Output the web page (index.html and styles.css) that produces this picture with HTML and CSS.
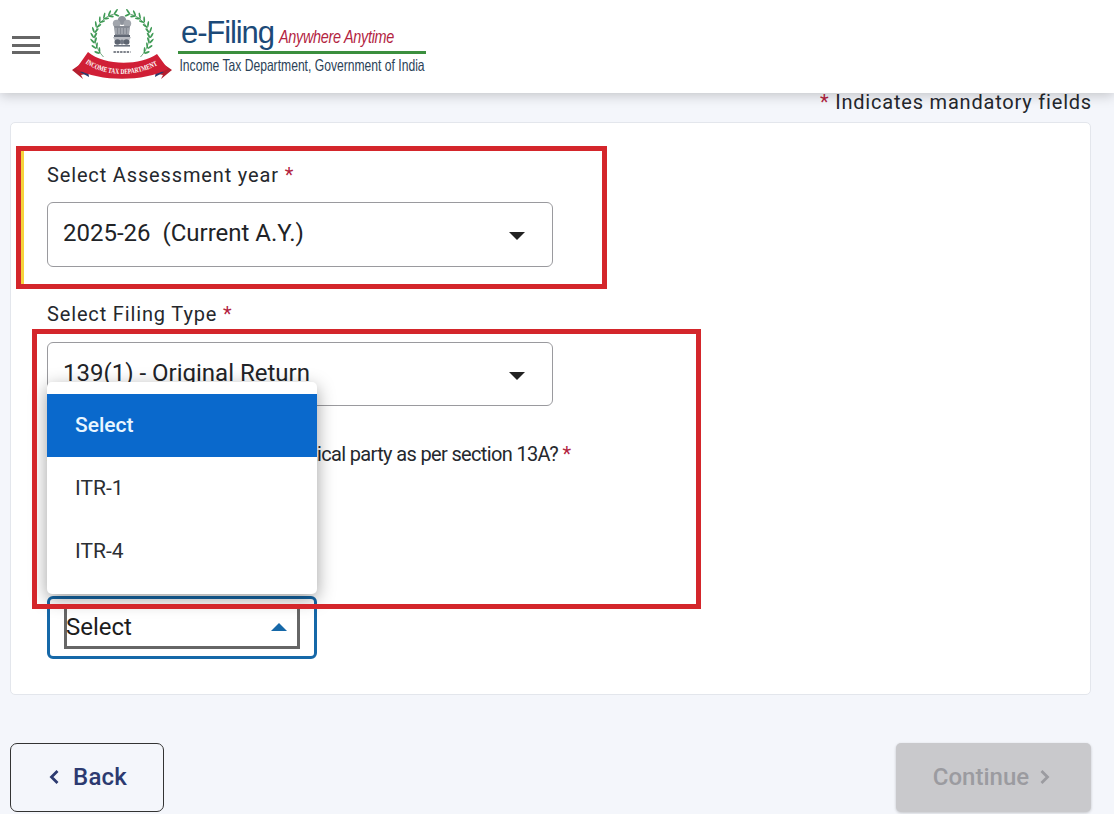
FILE: index.html
```html
<!DOCTYPE html>
<html lang="en">
<head>
    <meta charset="UTF-8">
    <meta name="viewport" content="width=device-width, initial-scale=1.0">
    <title>e-Filing - File Income Tax Return</title>
    <link rel="stylesheet" href="styles.css">
</head>
<body>
    <header class="top-bar">
        <div class="hamburger"><span></span><span></span><span></span></div>
        <svg class="emblem" width="102" height="72" viewBox="0 0 102 72">
            <defs>
                <ellipse id="leaf" cx="3.2" cy="0" rx="3.2" ry="1"/>
                <g id="wreath-half" fill="#3f9a55">
                    <path d="M41 5 C22 9 10 30 29 48" fill="none" stroke="#2f7d45" stroke-width="0.7"/>
                    <use href="#leaf" transform="translate(41 5) rotate(-50)"/><use href="#leaf" transform="translate(41 5) rotate(20)"/>
                    <use href="#leaf" transform="translate(34.4 6.9) rotate(-63)"/><use href="#leaf" transform="translate(34.4 6.9) rotate(7)"/>
                    <use href="#leaf" transform="translate(29 9.8) rotate(-75)"/><use href="#leaf" transform="translate(29 9.8) rotate(-5)"/>
                    <use href="#leaf" transform="translate(24.6 13.6) rotate(-87)"/><use href="#leaf" transform="translate(24.6 13.6) rotate(-17)"/>
                    <use href="#leaf" transform="translate(20.9 18.4) rotate(-100)"/><use href="#leaf" transform="translate(20.9 18.4) rotate(-30)"/>
                    <use href="#leaf" transform="translate(18.7 23.8) rotate(-113)"/><use href="#leaf" transform="translate(18.7 23.8) rotate(-43)"/>
                    <use href="#leaf" transform="translate(18 29) rotate(-125)"/><use href="#leaf" transform="translate(18 29) rotate(-55)"/>
                    <use href="#leaf" transform="translate(18.7 34.2) rotate(-137)"/><use href="#leaf" transform="translate(18.7 34.2) rotate(-67)"/>
                    <use href="#leaf" transform="translate(20.9 39.6) rotate(-150)"/><use href="#leaf" transform="translate(20.9 39.6) rotate(-80)"/>
                    <use href="#leaf" transform="translate(24.6 44.4) rotate(-163)"/><use href="#leaf" transform="translate(24.6 44.4) rotate(-93)"/>
                </g>
            </defs>
            <g transform="translate(50 28) scale(0.88 1) translate(-50 -28)">
                <use href="#wreath-half"/>
                <use href="#wreath-half" transform="matrix(-1 0 0 1 100 0)"/>
            </g>
            <!-- ashoka capital -->
            <g transform="translate(0 2)">
                <circle cx="50" cy="9.5" r="4.4" fill="#8d929b"/>
                <circle cx="44.6" cy="12.5" r="3.8" fill="#a2a6ad"/>
                <circle cx="55.4" cy="12.5" r="3.8" fill="#a2a6ad"/>
                <path d="M42 15 L58 15 L57 24 L43 24 Z" fill="#868b94"/>
                <path d="M44 17 V23 M47 17 V23 M50 17 V23 M53 17 V23 M56 17 V23" stroke="#c9ccd1" stroke-width="0.8"/>
                <rect x="42" y="24" width="16" height="2" fill="#5f6672"/>
                <path d="M41 26 H59 L56 32 H44 Z" fill="#b9bcc2"/>
                <ellipse cx="45.5" cy="31" rx="3" ry="2.8" fill="#5d6470"/>
                <ellipse cx="54.5" cy="31" rx="3" ry="2.8" fill="#5d6470"/>
                <ellipse cx="50" cy="31" rx="2.2" ry="2.6" fill="#717783"/>
                <rect x="42" y="34" width="16" height="1.6" fill="#6d7480"/>
                <path d="M41.5 41 H58.5" stroke="#555b66" stroke-width="1.6" stroke-dasharray="2.4 0.9"/>
            </g>
            <!-- ribbon -->
            <path d="M0 61 L10 54 L19 64 L9 66 L11 70 Z" fill="#b41f2f"/>
            <path d="M100 61 L90 54 L81 64 L91 66 L89 70 Z" fill="#b41f2f"/>
            <path d="M8 63 L16 61 L17 68 Z" fill="#2b3a6b"/>
            <path d="M92 63 L84 61 L83 68 Z" fill="#2b3a6b"/>
            <path d="M16 43 C32 57 68 57 85 45 L96 60 C72 73 28 73 4 60 Z" fill="#d01f36"/>
            <path id="ribbonCurve" d="M11 52 C30 69 68 69 90 53" fill="none"/>
            <text class="ribbon-text"><textPath href="#ribbonCurve" startOffset="3" textLength="76" lengthAdjust="spacingAndGlyphs">INCOME TAX DEPARTMENT</textPath></text>
        </svg>
        <div class="brand">
            <div class="brand-top"><span class="brand-name">e-Filing</span><span class="brand-tag">Anywhere Anytime</span></div>
            <div class="brand-sub">Income Tax Department, Government of India</div>
        </div>
    </header>

    <main class="page">
        <p class="mandatory-note"><span class="req">*</span> Indicates mandatory fields</p>

        <section class="card">
            <div class="field field-first">
                <label class="field-label">Select Assessment year <span class="req">*</span></label>
                <div class="select-box">
                    <span>2025-26&nbsp; (Current A.Y.)</span>
                    <i class="caret"></i>
                </div>
            </div>
            <div class="field field-second">
                <label class="field-label">Select Filing Type <span class="req">*</span></label>
                <div class="select-box select-short">
                    <span>139(1) - Original Return</span>
                    <i class="caret"></i>
                </div>
            </div>
            <p class="question">Are you filing this return of a political party as per section 13A? <span class="req">*</span></p>
            <div class="select-open">
                <div class="select-focus">
                    <span>Select</span>
                    <i class="caret caret-up"></i>
                </div>
            </div>
            <ul class="dropdown">
                <li class="active">Select</li>
                <li>ITR-1</li>
                <li>ITR-4</li>
            </ul>
        </section>

        <div class="actions">
            <button class="btn-back" type="button">
                <svg width="12" height="18" viewBox="0 0 12 18"><path d="M9.5 3 L3.5 9 L9.5 15" fill="none" stroke="#2c3a70" stroke-width="2.8"/></svg>
                Back
            </button>
            <button class="btn-continue" type="button" disabled>
                Continue
                <svg width="12" height="18" viewBox="0 0 12 18"><path d="M2.5 3 L8.5 9 L2.5 15" fill="none" stroke="#9b9ba0" stroke-width="2.8"/></svg>
            </button>
        </div>

        <div class="mark mark-year"></div>
        <div class="mark mark-type"></div>
    </main>
</body>
</html>
```

FILE: styles.css
```css
* {
    box-sizing: border-box;
}

html, body {
    height: 100%;
}

body {
    margin: 0;
    font-family: Roboto, "Noto Sans", sans-serif;
    background-color: #f4f6fb;
    color: #25282d;
    overflow: hidden;
}

.top-bar {
    height: 93px;
    background: white;
    display: flex;
    align-items: center;
    padding-left: 12px;
    box-shadow: 0 2px 12px rgba(0, 0, 0, 0.22);
    position: relative;
    z-index: 1;
}

.hamburger {
    width: 28px;
    display: flex;
    flex-direction: column;
    gap: 4.5px;
    margin: -3px 32px 0 0;
}

.hamburger span {
    height: 3px;
    background-color: #666;
}

.emblem {
    margin: -4px 4px 0 0;
    flex: none;
}

.brand {
    width: 248px;
    font-family: "Liberation Sans", Arial, sans-serif;
    margin-top: 4px;
}

.brand-top {
    display: flex;
    align-items: baseline;
    height: 31px;
    padding-left: 3px;
    border-bottom: 3px solid #3b8f3e;
    white-space: nowrap;
    line-height: 20px;
}

.brand-name {
    font-size: 31px;
    letter-spacing: -1.1px;
    color: #1c4a78;
    margin-right: 5px;
}

.brand-tag {
    display: inline-block;
    font-size: 19px;
    font-style: italic;
    letter-spacing: -0.4px;
    color: #b3243f;
    transform: scaleX(0.76);
    transform-origin: left;
}

.brand-sub {
    font-size: 16.5px;
    color: #2b4258;
    white-space: nowrap;
    padding: 2px 0 0 2px;
    line-height: 18px;
    transform: scaleX(0.735);
    transform-origin: left;
}

.page {
    position: relative;
    height: 721px;
    padding: 0 23px 0 10px;
}

.mandatory-note {
    margin: 0 -1px 0 0;
    height: 29px;
    text-align: right;
    font-size: 20px;
    line-height: 18px;
    letter-spacing: 0.8px;
}

.req {
    color: #b3243f;
}

.card {
    position: relative;
    width: 1081px;
    height: 573px;
    background: white;
    border: 1px solid #e3e6ec;
    border-radius: 5px;
    padding: 0 36px;
}

.field-first {
    padding-top: 37px;
}

.field-second {
    padding-top: 32px;
}

.field-label {
    display: block;
    font-size: 20px;
    line-height: 30px;
    letter-spacing: 0.85px;
    margin-bottom: 12px;
}

.field-second .field-label {
    margin-bottom: 13px;
}

.select-box {
    width: 506px;
    height: 65px;
    border: 1px solid #9a9a9e;
    border-radius: 6px;
    display: flex;
    align-items: center;
    justify-content: space-between;
    padding: 0 27px 3px 15px;
    font-size: 24px;
    color: #212327;
}

.select-short {
    height: 64px;
}

.caret {
    width: 0;
    height: 0;
    border-left: 8px solid transparent;
    border-right: 8px solid transparent;
    border-top: 8px solid #222;
    margin-top: 6px;
}

.caret-up {
    border-top: 0;
    border-bottom: 8px solid #1668a8;
    margin: 0 10px 0 0;
}

.question {
    margin: 33px 0 0;
    font-size: 20px;
    line-height: 30px;
    letter-spacing: -0.65px;
    white-space: nowrap;
}

.select-open {
    width: 270px;
    height: 63px;
    margin-top: 127px;
    border: 3px solid #1668a8;
    border-radius: 6px;
    padding: 7px 14px 7px;
}

.select-focus {
    height: 100%;
    border: 3px solid #666;
    border-top-width: 0;
    padding-top: 2px;
    display: flex;
    align-items: center;
    justify-content: space-between;
    font-size: 24px;
    color: #1d1d1d;
}

.select-focus span {
    margin-left: -1px;
}

.dropdown {
    position: absolute;
    left: 36px;
    top: 259px;
    width: 270px;
    height: 212px;
    margin: 0;
    padding: 12px 0 0;
    list-style: none;
    background: white;
    border-radius: 5px;
    box-shadow: 0 5px 18px rgba(0, 0, 0, 0.38);
}

.dropdown li {
    height: 63px;
    display: flex;
    align-items: center;
    padding: 0 0 2px 28px;
    font-size: 21px;
    color: #2b2e33;
}

.dropdown .active {
    background-color: #0a69cc;
    color: #e9f6ff;
    font-weight: 500;
}

.actions {
    display: flex;
    justify-content: space-between;
    width: 1081px;
    margin-top: 48px;
}

.actions button {
    height: 69px;
    font-family: Roboto, "Noto Sans", sans-serif;
    font-size: 24px;
    font-weight: 500;
    display: flex;
    align-items: center;
    justify-content: center;
    padding-bottom: 2px;
}

.btn-back {
    width: 154px;
    gap: 13px;
    background: transparent;
    border: 1px solid #333;
    border-radius: 7px;
    color: #2c3a70;
    letter-spacing: 0.2px;
    padding-left: 7px;
}

.btn-continue {
    width: 195px;
    gap: 10px;
    background-color: #c9c9cc;
    border: none;
    border-radius: 5px;
    color: #9b9ba0;
    box-shadow: 0 1px 3px rgba(0, 0, 0, 0.2);
    padding-right: 9px;
}

.ribbon-text {
    font-family: "Liberation Serif", serif;
    font-size: 7.4px;
    font-weight: bold;
    fill: white;
}

/* red boxes drawn over the screenshot */
.mark {
    position: absolute;
    border: 5px solid #d4262b;
    pointer-events: none;
}

.mark-year {
    left: 16px;
    top: 53px;
    width: 591px;
    height: 143px;
    box-shadow: inset 3px 0 0 #f5d33c;
}

.mark-type {
    left: 32px;
    top: 236px;
    width: 669px;
    height: 280px;
}
```
